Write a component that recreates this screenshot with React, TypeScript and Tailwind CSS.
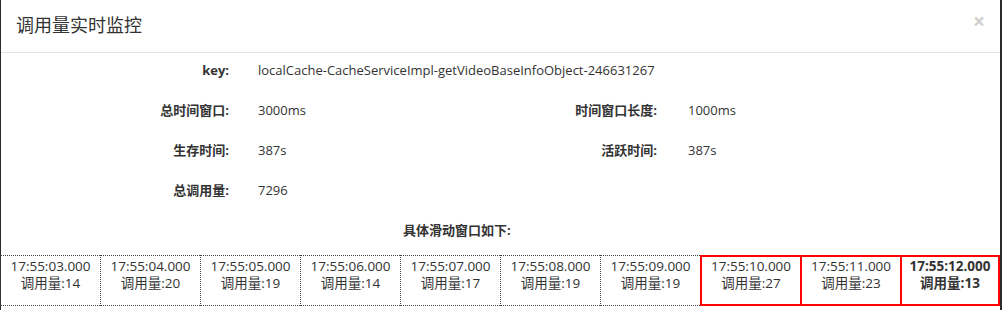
import React from "react"

type Slot = { time: string; count: number; hot?: boolean; current?: boolean }

const slots: Slot[] = [
  { time: "17:55:03.000", count: 14 },
  { time: "17:55:04.000", count: 20 },
  { time: "17:55:05.000", count: 19 },
  { time: "17:55:06.000", count: 14 },
  { time: "17:55:07.000", count: 17 },
  { time: "17:55:08.000", count: 19 },
  { time: "17:55:09.000", count: 19 },
  { time: "17:55:10.000", count: 27, hot: true },
  { time: "17:55:11.000", count: 23, hot: true },
  { time: "17:55:12.000", count: 13, hot: true, current: true },
]

const font = "font-['Open_Sans','Noto_Sans_CJK_SC',sans-serif]"

export default function App() {
  return (
    <div className={`w-[1002px] h-[310px] bg-[#2b2b2b] overflow-hidden ${font} text-[#333] text-[13px]`}>
      <div className="ml-[1px] w-[999px] h-full bg-white">
        {/* header */}
        <div className="h-[53px] border-b border-[#e5e5e5] flex items-center justify-between pl-[15px] pr-[15px]">
          <h4 className="text-[18px] leading-none pb-[3px]">调用量实时监控</h4>
          <button className="text-[21px] font-bold leading-none text-[#cfcfcf] pb-[10px]">×</button>
        </div>

        {/* body */}
        <div className="pt-[7px] flex flex-col gap-[20px] leading-[20px]">
          <div className="flex">
            <div className="w-[228px] text-right font-bold">key:</div>
            <div className="ml-[29px]">localCache-CacheServiceImpl-getVideoBaseInfoObject-246631267</div>
          </div>
          <div className="flex">
            <div className="w-[228px] text-right font-bold">总时间窗口:</div>
            <div className="ml-[29px] w-[243px]">3000ms</div>
            <div className="w-[156px] text-right font-bold">时间窗口长度:</div>
            <div className="ml-[31px]">1000ms</div>
          </div>
          <div className="flex">
            <div className="w-[228px] text-right font-bold">生存时间:</div>
            <div className="ml-[29px] w-[243px]">387s</div>
            <div className="w-[156px] text-right font-bold">活跃时间:</div>
            <div className="ml-[31px]">387s</div>
          </div>
          <div className="flex">
            <div className="w-[228px] text-right font-bold">总调用量:</div>
            <div className="ml-[29px]">7296</div>
          </div>
          <div className="pl-[402px] font-bold">具体滑动窗口如下:</div>
        </div>

        {/* sliding windows */}
        <div className="mt-[15px] -ml-[1px] flex">
          {slots.map((s, i) => (
            <div
              key={s.time}
              className={`w-[100px] h-[51px] shrink-0 text-center leading-[17px] text-[13.5px] ${
                s.hot
                  ? "border-2 border-solid border-[#ff0000] pt-[1px]" + (i < slots.length - 1 ? " border-r-0" : "")
                  : "border-l border-y border-dotted border-[#444] pt-[2px]"
              } ${s.current ? "font-bold" : ""}`}
            >
              <div>{s.time}</div>
              <div>调用量:{s.count}</div>
            </div>
          ))}
        </div>
      </div>
    </div>
  )
}
